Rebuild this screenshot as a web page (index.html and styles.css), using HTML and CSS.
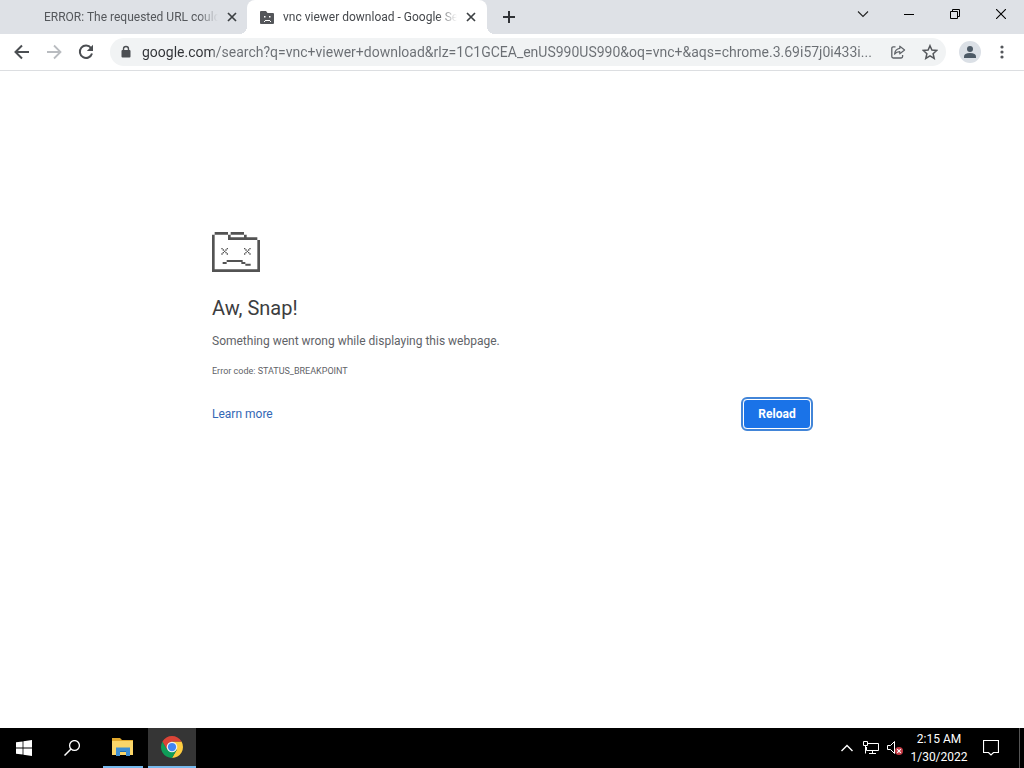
FILE: index.html
```html
<!DOCTYPE html>
<html lang="en">
<head>
<meta charset="utf-8">
<title>vnc viewer download - Google Search</title>
<link rel="stylesheet" href="styles.css">
</head>
<body>
<header class="tabstrip">
  <div class="tab">
    <span class="favicon"></span>
    <span class="tab-title">ERROR: The requested URL could</span>
    <button class="tab-close" aria-label="Close tab"><svg width="10" height="10" viewBox="0 0 10 10"><path d="M1 1l8 8M9 1L1 9" stroke="#3c4043" stroke-width="1.7"/></svg></button>
  </div>
  <div class="tab active">
    <svg class="favicon" viewBox="0 0 16 16"><path fill="#54565a" d="M1 3q0-1 1-1h5l1.500 2H14q1 0 1 1v9q0 1-1 1H2q-1 0-1-1z"/><path fill="#fff" d="M5 7h1.500v1.500H5zM10 7h1.500v1.500H10zM6 11h5v1H6zM5 12h1v1H5zM11 12h1v1h-1z"/></svg>
    <span class="tab-title">vnc viewer download - Google Se</span>
    <button class="tab-close" aria-label="Close tab"><svg width="10" height="10" viewBox="0 0 10 10"><path d="M1 1l8 8M9 1L1 9" stroke="#3c4043" stroke-width="1.7"/></svg></button>
  </div>
  <button class="new-tab" aria-label="New tab"><svg width="12" height="12" viewBox="0 0 12 12"><path d="M6 0v12M0 6h12" stroke="#303236" stroke-width="2"/></svg></button>
  <div class="window-controls">
    <button aria-label="Search tabs"><svg width="12" height="12" viewBox="0 0 12 12"><path d="M1 3.5l5 5 5-5" fill="none" stroke="#222" stroke-width="1.1"/></svg></button>
    <button aria-label="Minimize"><svg width="10" height="10" viewBox="0 0 10 10"><path d="M0 5.500h10" stroke="#000"/></svg></button>
    <button aria-label="Restore"><svg width="10" height="10" viewBox="0 0 10 10"><path d="M.5 2.500h7v7h-7zM2.500 2.500v-2h7v7h-2" fill="none" stroke="#000"/></svg></button>
    <button aria-label="Close"><svg width="10" height="10" viewBox="0 0 10 10"><path d="M0 0l10 10M10 0L0 10" stroke="#000" stroke-width="1.1"/></svg></button>
  </div>
</header>
<nav class="toolbar">
  <button aria-label="Back"><svg width="16" height="16" viewBox="0 0 16 16"><path d="M15 8H2M8 1.500L1.500 8 8 14.500" fill="none" stroke="#4b4e52" stroke-width="2"/></svg></button>
  <button aria-label="Forward" disabled><svg width="16" height="16" viewBox="0 0 16 16"><path d="M1 8h13M8 1.500L14.500 8 8 14.500" fill="none" stroke="#b9bcc0" stroke-width="1.800"/></svg></button>
  <button aria-label="Reload page"><svg width="16" height="16" viewBox="0 0 16 16"><path d="M13 4A6.200 6.200 0 1 0 14 9.500" fill="none" stroke="#4b4e52" stroke-width="2"/><path d="M15 .8V7H8.800z" fill="#4b4e52"/></svg></button>
  <div class="omnibox">
    <svg width="12" height="14" viewBox="0 0 12 14"><path d="M3.500 6V4a2.500 2.500 0 0 1 5 0v2" fill="none" stroke="#4b4e52" stroke-width="1.400"/><rect x="1.500" y="5" width="9" height="7.500" rx="1" fill="#4b4e52"/></svg>
    <input class="url" type="text" aria-label="Address" value="google.com/search?q=vnc+viewer+download&amp;rlz=1C1GCEA_enUS990US990&amp;oq=vnc+&amp;aqs=chrome.3.69i57j0i433i...">
    <button aria-label="Share"><svg width="16" height="16" viewBox="0 0 16 16"><path d="M5.500 2.800H3.200Q1.800 2.800 1.800 4.200v8.400q0 1.400 1.400 1.400h8q1.400 0 1.400-1.400V11" fill="none" stroke="#5f6368" stroke-width="1.300"/><path d="M9.800 2.200L14.600 6l-4.800 3.800V7.700Q6.500 7.700 4.600 10.200 5 5 9.800 4.400z" fill="none" stroke="#5f6368" stroke-width="1.200" stroke-linejoin="round"/></svg></button>
    <button aria-label="Bookmark this tab"><svg width="16" height="16" viewBox="0 0 16 16"><path d="M8 1.700l1.900 4.400 4.800.4-3.600 3.200 1.100 4.700L8 11.900l-4.200 2.500 1.100-4.700-3.600-3.200 4.800-.4z" fill="none" stroke="#54575b" stroke-width="1.500"/></svg></button>
  </div>
  <button class="profile" aria-label="Profile"><svg width="22" height="22" viewBox="0 0 22 22"><circle cx="11" cy="11" r="11" fill="#dbe0e6"/><circle cx="11" cy="8" r="3" fill="#4d5a66"/><path d="M5 17v-1.500q0-3.500 6-3.500t6 3.500V17z" fill="#4d5a66"/></svg></button>
  <button class="menu" aria-label="Menu"><svg width="4" height="14" viewBox="0 0 4 14"><g fill="#54575b"><circle cx="2" cy="2" r="1.600"/><circle cx="2" cy="7" r="1.600"/><circle cx="2" cy="12" r="1.600"/></g></svg></button>
</nav>
<main class="page">
  <div class="error">
    <svg class="error-icon" viewBox="0 0 144 120" fill="#535353"><path d="M8 0h40v8H8zM0 8h8v104h136v8H0zM56 0h40v8H56zM48 8h8v8h40V8h8v8h32v8H48zM136 24h8v96h-8z"/><path d="M28 48h4v4h-4zM44 48h4v4h-4zM32 52h4v4h-4zM40 52h4v4h-4zM36 56h4v4h-4zM32 60h4v4h-4zM40 60h4v4h-4zM28 64h4v4h-4zM44 64h4v4h-4zM96 48h4v4h-4zM112 48h4v4h-4zM100 52h4v4h-4zM108 52h4v4h-4zM104 56h4v4h-4zM100 60h4v4h-4zM108 60h4v4h-4zM96 64h4v4h-4zM112 64h4v4h-4zM44 84h48v6H44zM32 90h12v6H32zM88 90h12v6H88zM100 95h16v6h-16z"/></svg>
    <h1>Aw, Snap!</h1>
    <p class="message">Something went wrong while displaying this webpage.</p>
    <p class="code">Error code: STATUS_BREAKPOINT</p>
    <div class="actions"><a href="#">Learn more</a><button class="reload">Reload</button></div>
  </div>
</main>
<footer class="taskbar">
  <button aria-label="Start"><svg width="16" height="16" viewBox="0 0 16 16"><path fill="#fff" d="M0 2.300L6.600 1.400v6.200H0zM7.400 1.300L16 0v7.600H7.400zM0 8.400h6.600v6.200L0 13.700zM7.400 8.400H16V16l-8.600-1.200z"/></svg></button>
  <button aria-label="Search"><svg width="16" height="16" viewBox="0 0 16 16"><circle cx="10.500" cy="5.500" r="4.900" fill="none" stroke="#fff" stroke-width="1.300"/><path d="M7 9L.5 15.500" stroke="#fff" stroke-width="1.500"/></svg></button>
  <button class="explorer" aria-label="File Explorer"><svg width="22" height="20" viewBox="0 0 22 20"><path fill="#e2a92d" d="M0 1h8l2 2h11v4H0z"/><path fill="#fbd669" d="M0 4h21v14H0z"/><path fill="#3f8fd2" d="M4 10.500h14V19h-4v-4H8v4H4z"/><path fill="#1d6fb5" d="M8 14h6v1H8z"/></svg></button>
  <button class="chrome" aria-label="Google Chrome"><svg width="22" height="22" viewBox="0 0 24 24"><path fill="#ffcd40" d="M12 6h10.390A12 12 0 0 1 12 24l5.200-9z"/><path fill="#0f9d58" d="M1.610 6A12 12 0 0 0 12 24l5.200-9L12 12 6.800 15z"/><path fill="#db4437" d="M1.610 6A12 12 0 0 1 22.390 6H12v6l-5.200 3z"/><circle cx="12" cy="12" r="5.800" fill="#f1f1f1"/><circle cx="12" cy="12" r="4.500" fill="#4285f4"/></svg></button>
  <div class="tray">
    <button aria-label="Show hidden icons"><svg width="12" height="8" viewBox="0 0 12 8"><path d="M.5 7L6 1.500 11.500 7" fill="none" stroke="#fff" stroke-width="1.400"/></svg></button>
    <button aria-label="Network"><svg width="16" height="14" viewBox="0 0 16 14"><path d="M5 2.500h10.500v7H3.500V6M9.500 9.500v3M6 12.500h7M.5.500h4v4h-4zM2.500 4.500v8" fill="none" stroke="#fff"/></svg></button>
    <button aria-label="Volume muted"><svg width="16" height="16" viewBox="0 0 16 16"><path d="M.5 5.500h3l4-4v12l-4-4h-3z" fill="none" stroke="#fff"/><circle cx="12" cy="11" r="4" fill="#c43b45"/><path d="M10.200 9.200l3.600 3.600M13.800 9.200l-3.600 3.600" stroke="#fff" stroke-width="1.100"/></svg></button>
    <button class="clock"><span>2:15 AM</span><span>1/30/2022</span></button>
    <button class="notifications" aria-label="Notifications"><svg width="16" height="16" viewBox="0 0 16 16"><path d="M.5.500h15v12H10.500L8 15l-2.500-2.500h-5z" fill="none" stroke="#fff" stroke-width="1.200"/></svg></button>
    <button class="desktop" aria-label="Show desktop"></button>
  </div>
</footer>
</body>
</html>
```

FILE: styles.css
```css
* { box-sizing: border-box; }
body {
  margin: 0;
  min-height: 100vh;
  display: flex;
  flex-direction: column;
  background: #fff;
  font-family: Roboto, "Open Sans", sans-serif;
  font-size: 12px;
  color: #5f6368;
}
button {
  border: 0;
  padding: 0;
  background: none;
  font: inherit;
  color: inherit;
  display: flex;
  align-items: center;
  justify-content: center;
}
svg { flex: none; }
.tabstrip { display: flex; height: 34px; background: #dee1e6; }
.tab {
  flex: 0 1 240px;
  min-width: 0;
  height: 34px;
  display: flex;
  align-items: center;
  padding: 0 10px 0 12px;
  color: #54575b;
}
.tab:first-child { flex-basis: 247px; padding: 0 9px 0 16px; }
.tab.active {
  position: relative;
  background: #fff;
  border-radius: 8px 8px 0 0;
  color: #45484c;
}
.tab.active::before,
.tab.active::after {
  content: "";
  position: absolute;
  bottom: 0;
  width: 8px;
  height: 8px;
}
.tab.active::before { right: 100%; background: radial-gradient(circle at 0 0, transparent 8px, #fff 8px); }
.tab.active::after { left: 100%; background: radial-gradient(circle at 100% 0, transparent 8px, #fff 8px); }
.favicon { flex: none; width: 16px; height: 16px; }
.tab-title {
  flex: 1;
  min-width: 0;
  margin-left: 12px;
  overflow: hidden;
  white-space: nowrap;
  mask-image: linear-gradient(to left, transparent, #000 20px);
}
.tab.active .tab-title { margin-left: 8px; }
.tab-close { width: 12px; height: 16px; margin-left: 8px; }
.new-tab { width: 28px; margin-left: 8px; }
.window-controls { display: flex; height: 28px; margin-left: auto; }
.window-controls button { width: 46px; }
.toolbar {
  display: flex;
  align-items: center;
  height: 37px;
  padding: 0 6px;
  border-bottom: 1px solid #dcdee1;
}
.toolbar > button { width: 32px; height: 28px; }
.omnibox {
  flex: 1;
  min-width: 0;
  display: flex;
  align-items: center;
  height: 28px;
  margin-left: 8px;
  padding: 0 8px 0 10px;
  border-radius: 14px;
  background: #f1f3f4;
}
.omnibox button { width: 16px; height: 16px; margin-left: 16px; }
.url {
  flex: 1;
  min-width: 0;
  margin-left: 10px;
  padding: 0;
  border: 0;
  outline: 0;
  font: 14px/20px Roboto, "Open Sans", sans-serif;
  color: transparent;
  background: linear-gradient(to right, #303236 71px, #6a6e73 71px);
  background-clip: text;
}
.toolbar .profile { margin-left: 8px; }
.page { flex: 1; padding: 161px 24px 32px; }
.error { max-width: 600px; margin: 0 auto; }
.error-icon { display: block; width: 48px; height: 40px; }
h1 { margin: 20px 0 0; font-size: 20px; line-height: 32px; font-weight: 400; color: #3c3d40; }
p { margin: 0; }
.message { margin-top: 7px; line-height: 20px; }
.code { margin-top: 12px; font-size: 9px; line-height: 16px; }
.actions { display: flex; align-items: center; justify-content: space-between; margin-top: 20px; }
a { color: #3367b5; text-decoration: none; }
.reload {
  width: 68px;
  height: 30px;
  margin-right: 1px;
  border: 1px solid #fff;
  border-radius: 4px;
  outline: 2px solid #4285d8;
  background: #1a73e8;
  color: #fff;
  font-weight: 700;
}
.taskbar { display: flex; height: 40px; background: #000; color: #fff; }
.taskbar > button { width: 48px; }
.taskbar .explorer { width: 40px; margin-left: 7px; border-bottom: 2px solid #76b9ed; }
.taskbar .chrome { margin-left: 5px; background: #353535; border-bottom: 2px solid #76b9ed; }
.tray { display: flex; margin-left: auto; }
.tray button { width: 24px; }
.tray .clock { width: 64px; flex-direction: column; line-height: 18px; }
.tray .notifications { width: 40px; }
.tray .desktop { width: 5px; margin-left: 8px; border-left: 1px solid #555; }
```
